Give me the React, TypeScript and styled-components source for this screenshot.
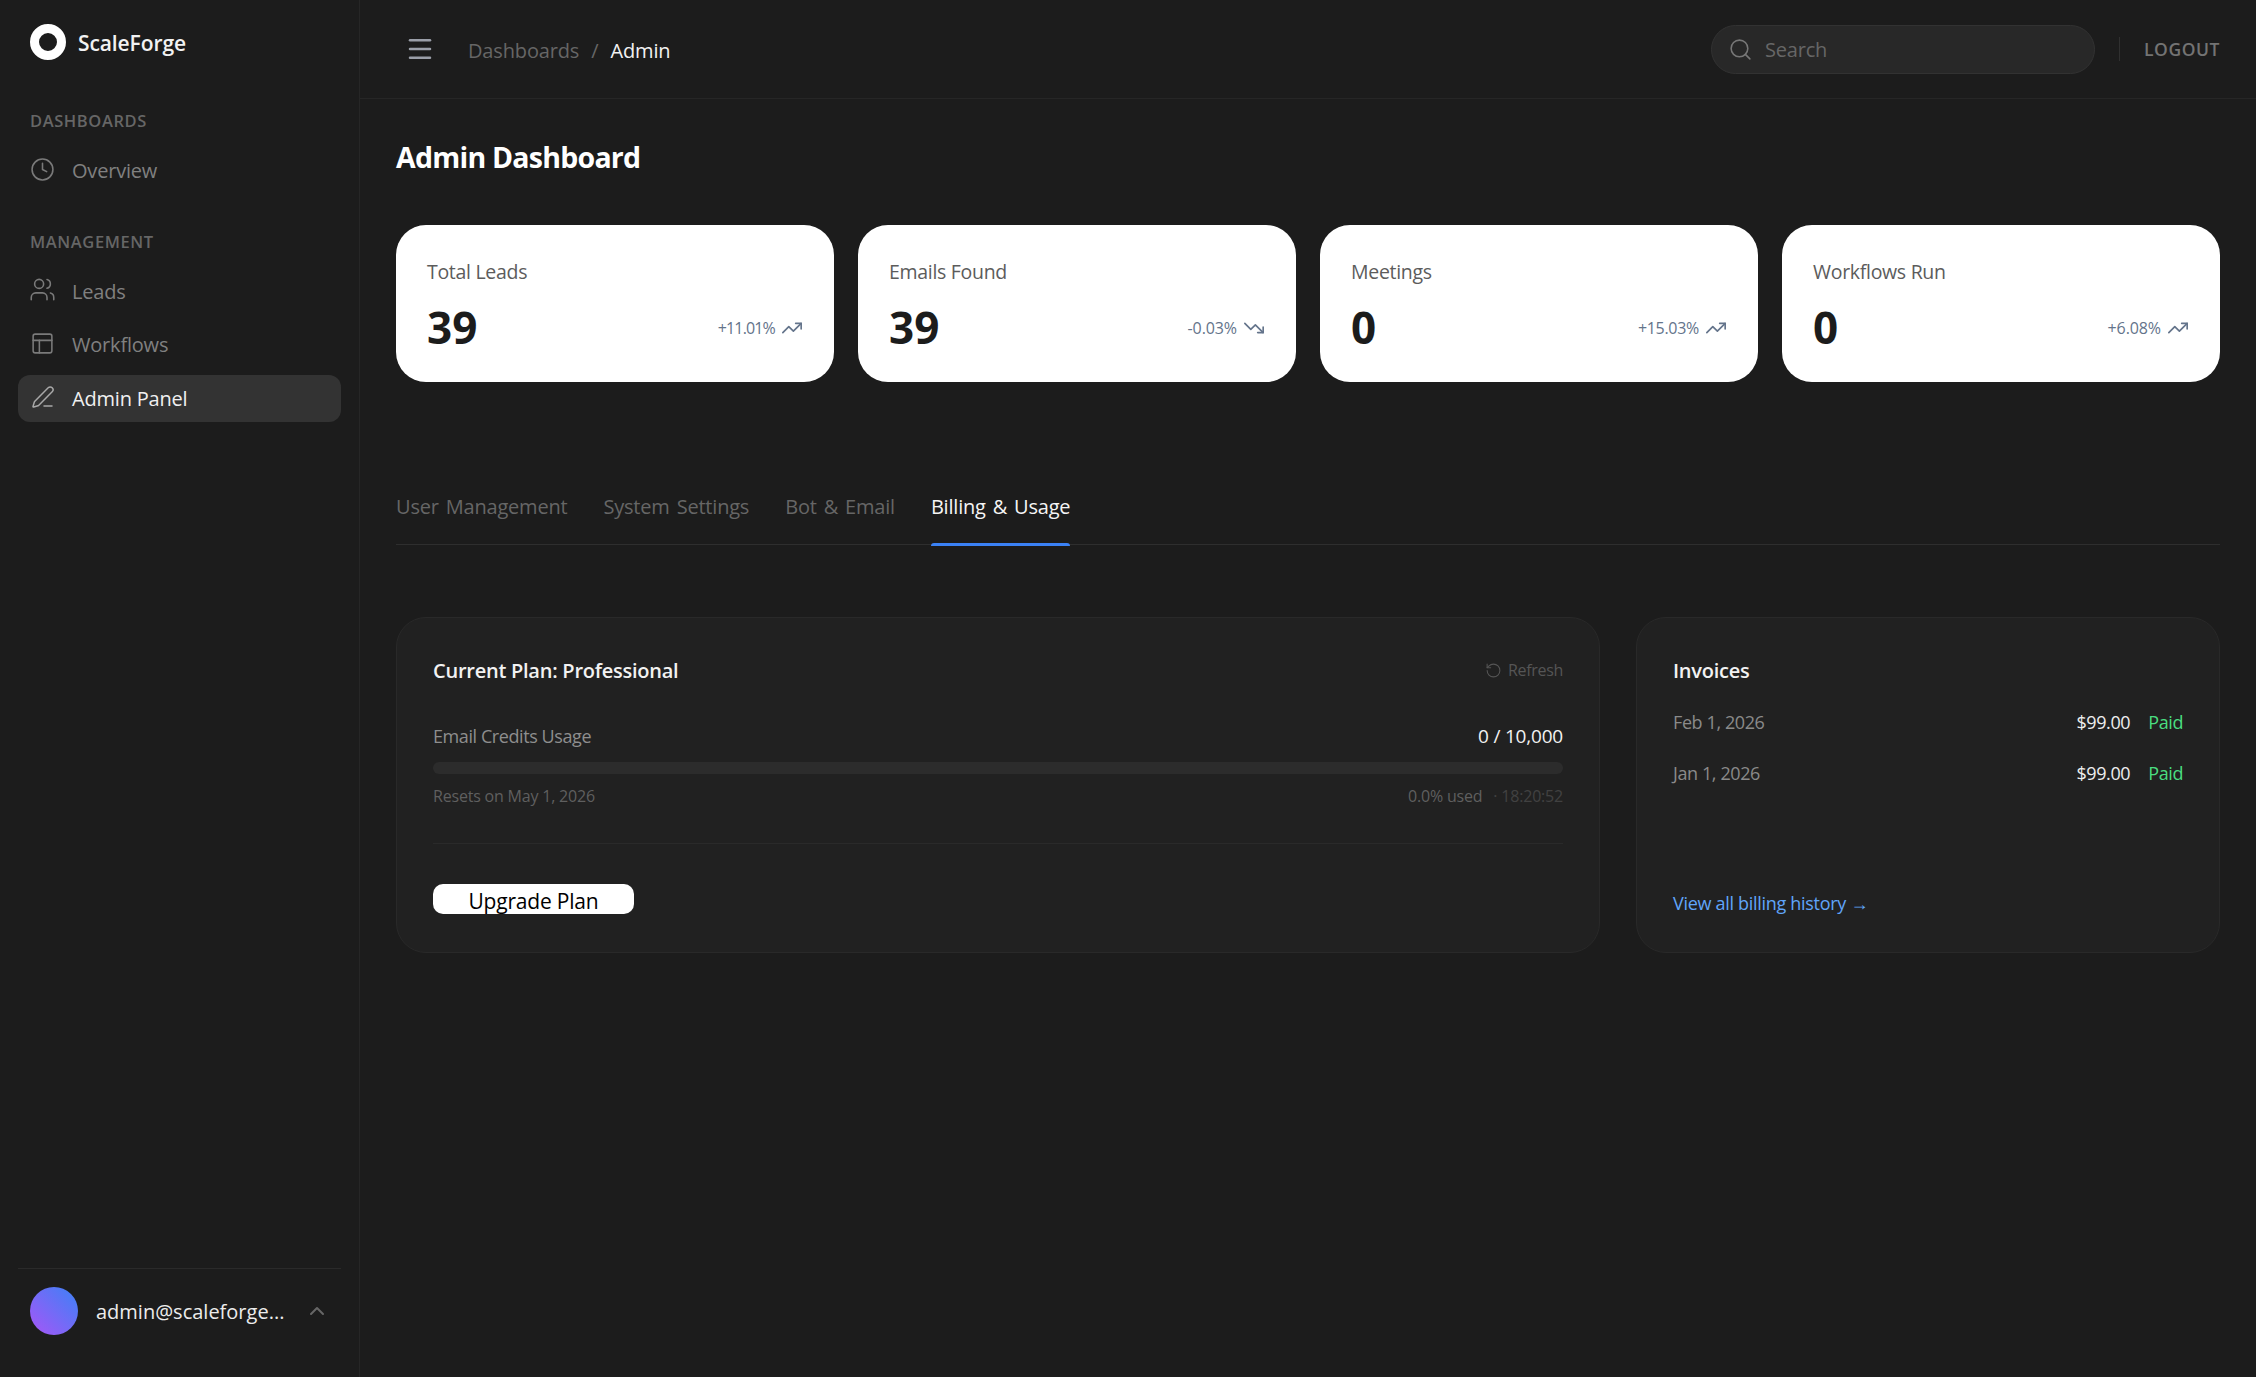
import React from "react";
import styled, { createGlobalStyle } from "styled-components";
import {
  Clock,
  Users,
  PanelsTopLeft,
  PenLine,
  Menu,
  Search,
  ChevronUp,
  TrendingUp,
  TrendingDown,
  RotateCcw,
} from "lucide-react";

const Global = createGlobalStyle`
  html, body { margin: 0; padding: 0; background: #1c1c1c; }
  body { font-family: "Open Sans", "Noto Sans", sans-serif; color: #fff; }
  * { box-sizing: border-box; }
`;

const Shell = styled.div`
  display: flex;
  width: 2256px;
  height: 1377px;
  background: #1c1c1c;
  overflow: hidden;
`;

const Sidebar = styled.aside`
  width: 360px;
  flex: none;
  display: flex;
  flex-direction: column;
  padding: 24px 18px 42px;
  border-right: 1px solid #262626;
`;

const Brand = styled.div`
  display: flex;
  align-items: center;
  gap: 12px;
  height: 36px;
  padding-left: 12px;
  margin-bottom: 49px;
`;

const BrandMark = styled.span`
  width: 36px;
  height: 36px;
  flex: none;
  border-radius: 50%;
  border: 9.5px solid #fff;
  background: #1c1c1c;
`;

const BrandName = styled.span`
  padding-top: 2px;
  font-size: 21px;
  font-weight: 600;
  letter-spacing: -0.1px;
  color: #f2f2f2;
`;

const SectionLabel = styled.div`
  height: 24px;
  line-height: 24px;
  padding-left: 12px;
  margin-bottom: 14px;
  font-size: 16.5px;
  font-weight: 600;
  letter-spacing: 0.6px;
  color: #666;
`;

const NavList = styled.nav`
  display: flex;
  flex-direction: column;
  gap: 6px;
  margin-bottom: 35px;
`;

const NavItem = styled.a<{ $active?: boolean }>`
  display: flex;
  align-items: center;
  gap: 17px;
  height: 47.5px;
  padding-left: 12px;
  border-radius: 12px;
  font-size: 20px;
  letter-spacing: -0.2px;
  color: ${(p) => (p.$active ? "#f0f0f0" : "#808080")};
  background: ${(p) => (p.$active ? "#333333" : "transparent")};
`;

const NavIcon = styled.span<{ $active?: boolean }>`
  width: 25px;
  height: 25px;
  margin-top: -3px;
  flex: none;
  display: flex;
  align-items: center;
  justify-content: center;
  color: ${(p) => (p.$active ? "#a8a8a8" : "#7a7a7a")};
  svg {
    flex: none;
  }
`;

const UserRow = styled.div`
  margin-top: auto;
  display: flex;
  align-items: center;
  gap: 18px;
  padding: 18px 0 0 12px;
  border-top: 1px solid #2a2a2a;
`;

const Avatar = styled.span`
  width: 48px;
  height: 48px;
  flex: none;
  border-radius: 50%;
  background: linear-gradient(45deg, #a855f7, #3b82f6);
`;

const UserName = styled.span`
  width: 190px;
  flex: none;
  font-size: 20px;
  color: #ececec;
  white-space: nowrap;
`;

const UserChevron = styled(ChevronUp)`
  flex: none;
  color: #666;
  margin-left: 1px;
`;

const Main = styled.main`
  flex: 1;
  min-width: 0;
  display: flex;
  flex-direction: column;
`;

const Header = styled.header`
  height: 99px;
  flex: none;
  display: flex;
  align-items: center;
  padding: 0 36px 0 45px;
  border-bottom: 1px solid #262626;
`;

const MenuIcon = styled(Menu)`
  color: #9a9ea8;
  margin-right: 33px;
  flex: none;
`;

const Crumbs = styled.div`
  display: flex;
  align-items: center;
  gap: 12px;
  padding-top: 2px;
  font-size: 20px;
  letter-spacing: -0.15px;
  color: #666;
  flex: 1;
`;

const CrumbCurrent = styled.span`
  color: #f2f2f2;
`;

const SearchBox = styled.div`
  width: 384px;
  height: 49px;
  display: flex;
  align-items: center;
  gap: 12px;
  padding-left: 16px;
  border-radius: 25px;
  background: #282828;
  border: 1px solid #323232;
  font-size: 20px;
  letter-spacing: -0.2px;
  color: #666;
  svg {
    color: #777;
    flex: none;
  }
`;

const HeaderDivider = styled.span`
  width: 1px;
  height: 24px;
  background: #303030;
  margin: 0 24px;
`;

const Logout = styled.span`
  font-size: 17.5px;
  font-weight: 600;
  letter-spacing: 0.55px;
  color: #737373;
`;

const Content = styled.div`
  padding: 37px 36px 0;
  display: flex;
  flex-direction: column;
`;

const Title = styled.h1`
  margin: 0 0 47px;
  height: 42px;
  line-height: 42px;
  font-size: 28.5px;
  font-weight: 700;
  letter-spacing: -0.75px;
  color: #fff;
`;

const Stats = styled.section`
  display: grid;
  grid-template-columns: repeat(4, 1fr);
  gap: 24px;
`;

const StatCard = styled.article`
  height: 157px;
  padding: 33px 31px 0;
  background: #fff;
  border-radius: 30px;
  display: flex;
  flex-direction: column;
`;

const StatLabel = styled.div`
  height: 28px;
  line-height: 28px;
  font-size: 19.5px;
  letter-spacing: -0.3px;
  color: #5c5c5c;
`;

const StatRow = styled.div`
  margin-top: 11px;
  display: flex;
  align-items: center;
  justify-content: space-between;
`;

const StatValue = styled.div`
  font-size: 44px;
  line-height: 60px;
  font-weight: 700;
  color: #1c1c1c;
`;

const Trend = styled.div<{ $tracking: number }>`
  display: flex;
  align-items: center;
  gap: 6px;
  padding-top: 2px;
  font-size: 16px;
  letter-spacing: ${(p) => p.$tracking}px;
  color: #64748b;
`;

const Tabs = styled.div`
  margin-top: 97px;
  height: 66px;
  display: flex;
  gap: 36px;
  border-bottom: 1px solid #2e2e2e;
`;

const Tab = styled.div<{ $active?: boolean }>`
  position: relative;
  height: 65px;
  padding-top: 14px;
  line-height: 28px;
  font-size: 20px;
  letter-spacing: -0.2px;
  word-spacing: 2px;
  color: ${(p) => (p.$active ? "#f5f5f5" : "#666")};
  &::after {
    content: "";
    display: ${(p) => (p.$active ? "block" : "none")};
    position: absolute;
    left: 0;
    right: 0;
    bottom: -2px;
    height: 3px;
    border-radius: 3px 3px 0 0;
    background: #3b82f6;
  }
`;

const Panels = styled.div`
  margin-top: 72px;
  display: grid;
  grid-template-columns: 1fr 584px;
  gap: 36px;
`;

const Panel = styled.section`
  height: 336px;
  padding: 36px 36px 0;
  background: #212121;
  border: 1px solid #292929;
  border-radius: 30px;
  display: flex;
  flex-direction: column;
`;

const PanelHead = styled.div`
  height: 32px;
  display: flex;
  align-items: center;
  justify-content: space-between;
`;

const PanelTitle = styled.h2`
  margin: 0;
  font-size: 20px;
  font-weight: 600;
  letter-spacing: -0.25px;
  color: #f2f2f2;
`;

const Refresh = styled.span`
  display: flex;
  align-items: center;
  gap: 6px;
  font-size: 16px;
  letter-spacing: -0.3px;
  color: #555;
`;

const UsageRow = styled.div`
  margin-top: 35px;
  height: 30px;
  display: flex;
  align-items: center;
  justify-content: space-between;
`;

const UsageLabel = styled.span`
  font-size: 18px;
  letter-spacing: -0.42px;
  color: #8e8e8e;
`;

const UsageValue = styled.span`
  font-size: 19px;
  font-weight: 500;
  letter-spacing: -0.2px;
  color: #f2f2f2;
`;

const Progress = styled.div`
  margin-top: 11px;
  height: 12px;
  border-radius: 6px;
  background: #2c2c2c;
`;

const Meta = styled.div`
  margin-top: 10px;
  height: 24px;
  display: flex;
  align-items: center;
  justify-content: space-between;
  font-size: 16px;
  letter-spacing: -0.2px;
  color: #5f5f5f;
`;

const MetaRight = styled.span`
  display: flex;
  gap: 11px;
`;

const Timestamp = styled.span`
  color: #414141;
`;

const Rule = styled.hr`
  margin: 35px 0 0;
  border: 0;
  border-top: 1px solid #2a2a2a;
`;

const Upgrade = styled.button`
  margin-top: 40px;
  width: 201px;
  height: 30px;
  border: 0;
  border-radius: 10px;
  background: #fff;
  color: #000;
  font-family: inherit;
  font-size: 21px;
  font-weight: 500;
  letter-spacing: -0.2px;
  line-height: 30px;
  padding: 2px 0 0;
`;

const InvoiceRows = styled.div`
  margin-top: 22px;
  display: flex;
  flex-direction: column;
  gap: 23px;
`;

const InvoiceRow = styled.div`
  height: 28px;
  display: flex;
  align-items: center;
  font-size: 18px;
  letter-spacing: -0.4px;
`;

const InvoiceDate = styled.span`
  flex: 1;
  color: #8a8a8a;
`;

const InvoiceAmount = styled.span`
  color: #eee;
  margin-right: 18px;
`;

const InvoiceStatus = styled.span`
  color: #4ade80;
`;

const HistoryLink = styled.a`
  margin-top: auto;
  margin-bottom: 37px;
  font-size: 18px;
  letter-spacing: -0.3px;
  color: #60a5fa;
`;

const stats = [
  { label: "Total Leads", value: "39", trend: "+11.01%", up: true, tracking: -0.85 },
  { label: "Emails Found", value: "39", trend: "-0.03%", up: false, tracking: -0.1 },
  { label: "Meetings", value: "0", trend: "+15.03%", up: true, tracking: -0.3 },
  { label: "Workflows Run", value: "0", trend: "+6.08%", up: true, tracking: -0.1 },
];

const invoices = [
  { date: "Feb 1, 2026", amount: "$99.00" },
  { date: "Jan 1, 2026", amount: "$99.00" },
];

export default function App() {
  return (
    <Shell>
      <Global />
      <Sidebar>
        <Brand>
          <BrandMark />
          <BrandName>ScaleForge</BrandName>
        </Brand>
        <SectionLabel>DASHBOARDS</SectionLabel>
        <NavList>
          <NavItem>
            <NavIcon>
              <Clock size={25} strokeWidth={1.5} />
            </NavIcon>
            Overview
          </NavItem>
        </NavList>
        <SectionLabel>MANAGEMENT</SectionLabel>
        <NavList>
          <NavItem>
            <NavIcon>
              <Users size={27} strokeWidth={1.4} />
            </NavIcon>
            Leads
          </NavItem>
          <NavItem>
            <NavIcon>
              <PanelsTopLeft size={25} strokeWidth={1.5} />
            </NavIcon>
            Workflows
          </NavItem>
          <NavItem $active>
            <NavIcon $active>
              <PenLine size={24} strokeWidth={1.5} />
            </NavIcon>
            Admin Panel
          </NavItem>
        </NavList>
        <UserRow>
          <Avatar />
          <UserName>admin@scaleforge...</UserName>
          <UserChevron size={24} strokeWidth={2} />
        </UserRow>
      </Sidebar>
      <Main>
        <Header>
          <MenuIcon size={30} strokeWidth={2} />
          <Crumbs>
            <span>Dashboards</span>
            <span>/</span>
            <CrumbCurrent>Admin</CrumbCurrent>
          </Crumbs>
          <SearchBox>
            <Search size={25} strokeWidth={1.5} />
            Search
          </SearchBox>
          <HeaderDivider />
          <Logout>LOGOUT</Logout>
        </Header>
        <Content>
          <Title>Admin Dashboard</Title>
          <Stats>
            {stats.map((s) => (
              <StatCard key={s.label}>
                <StatLabel>{s.label}</StatLabel>
                <StatRow>
                  <StatValue>{s.value}</StatValue>
                  <Trend $tracking={s.tracking}>
                    {s.trend}
                    {s.up ? (
                      <TrendingUp size={22} strokeWidth={1.8} />
                    ) : (
                      <TrendingDown size={22} strokeWidth={1.8} />
                    )}
                  </Trend>
                </StatRow>
              </StatCard>
            ))}
          </Stats>
          <Tabs>
            <Tab>User Management</Tab>
            <Tab>System Settings</Tab>
            <Tab>Bot &amp; Email</Tab>
            <Tab $active>Billing &amp; Usage</Tab>
          </Tabs>
          <Panels>
            <Panel>
              <PanelHead>
                <PanelTitle>Current Plan: Professional</PanelTitle>
                <Refresh>
                  <RotateCcw size={17} strokeWidth={1.5} />
                  Refresh
                </Refresh>
              </PanelHead>
              <UsageRow>
                <UsageLabel>Email Credits Usage</UsageLabel>
                <UsageValue>0 / 10,000</UsageValue>
              </UsageRow>
              <Progress />
              <Meta>
                <span>Resets on May 1, 2026</span>
                <MetaRight>
                  <span>0.0% used</span>
                  <Timestamp>· 18:20:52</Timestamp>
                </MetaRight>
              </Meta>
              <Rule />
              <Upgrade>Upgrade Plan</Upgrade>
            </Panel>
            <Panel>
              <PanelHead>
                <PanelTitle>Invoices</PanelTitle>
              </PanelHead>
              <InvoiceRows>
                {invoices.map((i) => (
                  <InvoiceRow key={i.date}>
                    <InvoiceDate>{i.date}</InvoiceDate>
                    <InvoiceAmount>{i.amount}</InvoiceAmount>
                    <InvoiceStatus>Paid</InvoiceStatus>
                  </InvoiceRow>
                ))}
              </InvoiceRows>
              <HistoryLink>View all billing history →</HistoryLink>
            </Panel>
          </Panels>
        </Content>
      </Main>
    </Shell>
  );
}
